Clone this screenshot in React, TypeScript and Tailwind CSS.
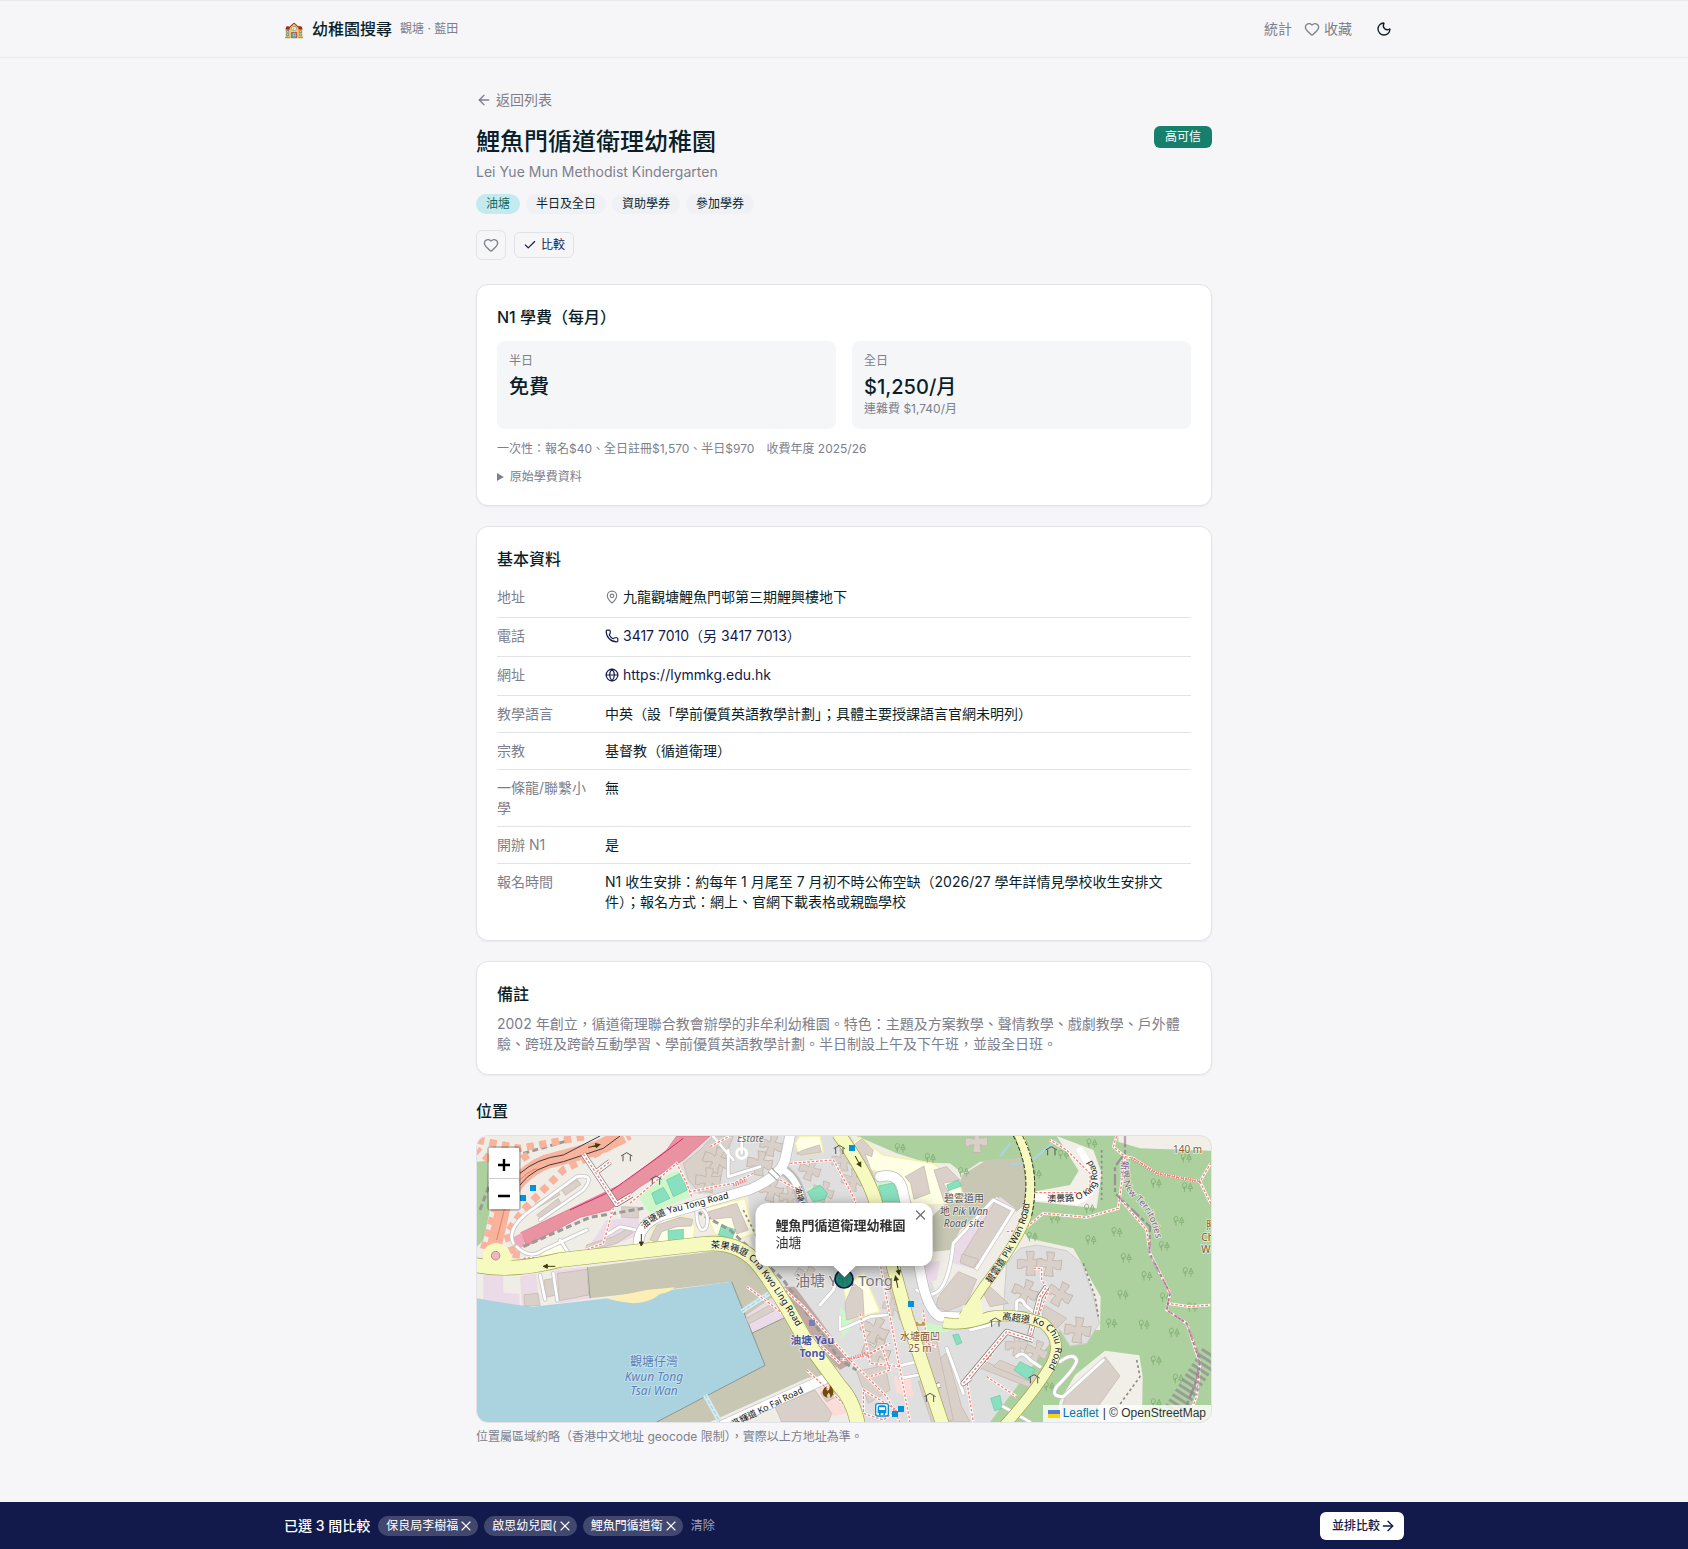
import { ArrowLeft, ArrowRight, Check, Globe, Heart, MapPin, Moon, Phone, X } from "lucide-react";
import type { ReactNode } from "react";

const tags = ["半日及全日", "資助學券", "參加學券"];

const compared = ["保良局李樹福", "啟思幼兒園(", "鯉魚門循道衛"];

const infoRows: { label: string; value: ReactNode; tall?: boolean }[] = [
  {
    label: "地址",
    tall: true,
    value: (
      <span className="flex items-center gap-1">
        <MapPin className="size-3.5 text-[#7d808b]" />
        九龍觀塘鯉魚門邨第三期鯉興樓地下
      </span>
    ),
  },
  {
    label: "電話",
    tall: true,
    value: (
      <a href="tel:34177010" className="flex w-fit items-center gap-1 text-[#131a4b]">
        <Phone className="size-3.5" />
        3417 7010（另 3417 7013）
      </a>
    ),
  },
  {
    label: "網址",
    tall: true,
    value: (
      <a href="https://lymmkg.edu.hk" className="flex w-fit items-center gap-1 text-[#131a4b]">
        <Globe className="size-3.5" />
        https://lymmkg.edu.hk
      </a>
    ),
  },
  { label: "教學語言", value: "中英（設「學前優質英語教學計劃」；具體主要授課語言官網未明列）" },
  { label: "宗教", value: "基督教（循道衛理）" },
  { label: "一條龍/聯繫小學", value: "無" },
  { label: "開辦 N1", value: "是" },
  {
    label: "報名時間",
    value: "N1 收生安排：約每年 1 月尾至 7 月初不時公佈空缺（2026/27 學年詳情見學校收生安排文件）；報名方式：網上、官網下載表格或親臨學校",
  },
];

function Card({ title, children }: { title: string; children: ReactNode }) {
  return (
    <section className="rounded-xl border border-[#e2e3e9] bg-white p-5 shadow-xs">
      <h2 className="mb-2 text-base font-medium">{title}</h2>
      {children}
    </section>
  );
}

function SiteHeader() {
  return (
    <header className="border-y border-[#e9eaee]">
      <div className="mx-auto flex h-14 max-w-6xl items-center justify-between px-4">
        <div className="flex items-center gap-2">
          <a href="#home" className="flex items-center gap-2 text-base font-medium">
            <span aria-hidden="true">🏫</span>
            幼稚園搜尋
          </a>
          <span className="text-xs text-[#7d808b]">觀塘 · 藍田</span>
        </div>
        <nav className="flex items-center gap-3 text-sm text-[#7d808b]">
          <a href="#stats">統計</a>
          <a href="#saved" className="flex items-center gap-1">
            <Heart className="size-4" />
            收藏
          </a>
          <button type="button" aria-label="切換深色模式" className="flex h-8 w-10 items-center justify-center text-[#0a1f29]">
            <Moon className="size-4" />
          </button>
        </nav>
      </div>
    </header>
  );
}

// Map geometry. Units are a third of a CSS pixel.
const towers: [number, number, number][] = [
  [1680, 400, 40], [1738, 402, 40], [1666, 486, 40], [1770, 492, 40], [1824, 600, 42],
  [870, 100, 40], [905, 45, 36], [905, 180, 38], [960, 200, 34], [740, 90, 42], [715, 150, 40],
  [1020, 120, 34], [1120, 90, 36], [1150, 150, 36], [1060, 185, 34], [1215, 600, 44], [1220, 665, 44],
  [1010, 440, 36], [1640, 645, 36], [1700, 665, 36], [1520, 35, 36], [1265, 530, 28],
];

const buildings = [
  "M195 222L262 180L270 194L203 234Z", "M200 255L265 205L272 220L210 264Z", "M275 180L322 148L332 164L286 196Z",
  "M640 100L690 60L730 18L790 18L770 70L750 150L690 190L655 150Z",
  "M540 330L560 285L630 262L668 268L664 288L620 290L575 305L560 338Z",
  "M715 245L800 220L835 300L800 312L785 262L722 268Z",
  "M345 366L350 345L430 320L475 295L488 308L440 340Z", "M455 230L505 232L505 264L455 262Z",
  "M262 430L352 418L356 495L268 512Z", "M222 450L255 445L260 495L228 502Z", "M162 494L204 490L210 526L164 528Z",
  "M828 565L905 522L912 542L836 582Z", "M980 70L1000 60L1048 45L1054 66L992 76Z",
  "M1145 50L1175 26L1210 60L1205 80L1185 72L1215 150L1195 158Z",
  "M1305 140L1362 108L1380 190L1332 208L1322 160Z", "M1392 120L1430 110L1470 150L1420 160L1450 208L1422 215Z",
  "M1480 370L1580 208L1625 240L1520 414Z", "M1476 372L1526 388L1510 414L1470 398Z",
  "M1405 500L1465 425L1520 448L1490 520L1430 544L1398 530Z",
  "M1538 485L1560 470L1615 520L1560 530Z", "M1722 525L1790 565L1755 600L1715 570Z",
  "M1785 800L1905 680L1950 738L1850 876L1765 876Z",
  "M1535 690L1700 760L1685 775L1520 710Z", "M1570 710L1590 690L1720 745L1708 765Z",
  "M1395 700L1430 668L1475 830L1500 876L1440 876Z", "M1335 610L1400 630L1450 870L1415 876L1370 760Z",
  "M1345 755L1390 740L1425 876L1385 876Z", "M1240 430L1290 420L1320 560L1290 570Z",
  "M1125 520L1150 460L1178 480L1182 555L1130 570Z", "M1160 725L1245 705L1260 780L1195 820Z",
  "M915 830L1035 780L1085 850L1075 876L935 876Z", "M1052 790L1085 770L1100 800L1070 815Z",
];

const courts = [
  "M590 150L635 128L652 180L610 200Z", "M545 190L580 172L600 205L558 224Z", "M594 302L640 298L640 338L596 342Z",
  "M755 285L798 300L785 328L745 315Z", "M1012 186L1050 165L1072 190L1065 208L1030 216Z",
  "M1226 168L1272 158L1290 215L1238 215Z", "M1430 165L1465 150L1474 168L1436 182Z",
  "M1632 720L1650 695L1695 718L1675 750Z", "M1562 805L1590 796L1598 835L1574 842Z", "M1448 615L1465 612L1476 638L1460 645Z",
];

const trees: [number, number][] = [
  [1290, 54], [1380, 84], [1480, 126], [1865, 40], [1780, 74], [1698, 132], [1858, 236], [1754, 266],
  [2058, 160], [2152, 172], [2126, 273], [1940, 306], [1862, 330], [2082, 348], [1968, 384], [2154, 426],
  [2030, 438], [1958, 494], [2086, 502], [1924, 580], [2022, 584], [2112, 608], [2058, 692], [2124, 746],
  [1737, 770], [2058, 820], [1686, 320], [2148, 84], [2166, 532],
];

const footpaths = [
  "M720 50L780 18", "M480 220L620 100L650 160L665 200", "M160 385L300 378L400 340L430 235",
  "M830 470L905 525L1000 600L1110 700", "M850 130L790 160L660 185", "M880 420L1000 530L1140 690L1250 800L1290 876",
  "M960 100L1090 90L1150 200L1230 400L1320 876", "M1695 188L1860 188L1860 130L1790 60L1740 30",
  "M1610 305L1660 300L1720 250L1850 262L1945 235L1965 80L1930 50L1940 18",
  "M1965 80L1990 85L2060 130L2190 155L2222 100", "M2190 155L2222 220",
  "M1945 200L2030 300L2040 370L2100 490L2090 540L2150 580L2190 700L2180 800L2150 876",
  "M2090 520L2160 530L2222 525", "M1690 415L1715 415L1715 450L1735 480L1705 560L1680 630",
  "M1680 630L1610 605L1560 680L1490 750L1510 876", "M1110 690L1180 680L1260 640",
  "M1170 550L1200 700L1290 710", "M1010 720L1180 876", "M930 150L985 180L1000 280",
  "M1550 740L1640 800", "M1360 540L1370 640L1400 650", "M1180 780L1280 840L1240 870L1180 850Z",
  "M1190 680L1235 650L1260 720L1200 740",
];

const rails = ["M160 350L360 262L520 235", "M680 245L780 300L940 450L1110 690L1160 720", "M30 240L60 160L120 90", "M160 70L300 30"];

function Tower({ x, y, r }: { x: number; y: number; r: number }) {
  return (
    <g transform={`translate(${x} ${y}) rotate(${(x * 7) % 40}) scale(${r})`}>
      <path
        d="M-.3-.9H.3V-.6L.2-.3H.6L.9-.4V.35H.55L.3.2V.5L.4.9H-.3V.6L-.2.25L-.6.3V.4H-.95V-.3H-.5L-.2-.2V-.5Z"
        fill="#d9d0c9"
        stroke="#c2b3a7"
        strokeWidth=".06"
      />
    </g>
  );
}

function StreetMap() {
  return (
    <svg
      viewBox="21 18 2202 858"
      preserveAspectRatio="xMidYMid slice"
      className="h-full w-full font-['Noto_Sans','Noto_Sans_CJK_TC',sans-serif]"
      role="img"
      aria-label="油塘地圖"
    >
      <defs>
        <path id="yauTong" d="M522 298Q570 250 640 240L800 198" />
        <path id="chaKwoLing" d="M722 354Q800 352 850 398Q910 470 1010 640" />
        <path id="pikWan" d="M1562 462Q1640 350 1668 270Q1682 230 1686 150" />
        <path id="oKing" d="M1732 216L1795 214Q1870 205 1880 160Q1890 110 1845 66" />
        <path id="koChiu" d="M1596 568L1680 578Q1750 590 1756 650Q1754 700 1700 760" />
        <path id="koFai" d="M790 892L1010 782" />
        <path id="newTerritories" d="M1955 92Q1950 165 1985 200Q2050 250 2060 345" />
        <path id="yauTongSide" d="M976 170L992 240" />
        <g id="trees" fill="none" stroke="#7fae74" strokeWidth="2.5">
          <path d="M-8 14V-2M-8-14Q-16-12-14-4Q-14 2-8 1Q-1 1-2-7Q-2-13-8-14M-8 6L-13 2M9 14V4M9-12L2 4H16ZM5-2H13" />
        </g>
        <path id="arrow" d="M-18 0H18M18 0L6-6V6Z" fill="#403a10" stroke="#403a10" strokeWidth="3" />
        <path id="shelter" d="M-17-4L0-14L17-4M-11-6V12M11-6V12" fill="none" stroke="#555" strokeWidth="3" />
      </defs>

      {/* land use */}
      <path fill="#f0ece6" d="M21 18H2223V876H21Z" />
      <path fill="#e0dfdf" d="M640 18H1140L1310 220L1400 500L1560 560L1660 545L1770 600L1760 680L1580 876H1150L1050 700L880 440L840 330L835 200L650 190L620 90Z" />
      <path fill="#add19e" d="M21 95L52 92L58 250L40 330L21 350Z" />
      <path fill="#add19e" d="M1160 18H1640L1660 90L1530 95L1478 130L1440 100L1370 98L1280 70Z" />
      <path fill="#c7c7b4" d="M1655 84L1550 90L1476 135L1460 190L1385 260L1390 365L1440 360L1470 300L1580 200L1640 245L1690 200Z" />
      <path fill="#add19e" d="M1665 18H2223V876H1560L1770 600L1890 600L1892 500L1810 355L1675 325L1650 290L1700 200L1690 120Z" />
      <path fill="#f2efe9" d="M1760 18L1870 60L1895 130L1880 235L1695 215L1690 185L1800 165L1826 122ZM1945 18H2223V62L2010 55L1945 35Z" />
      <path fill="#f2efe9" d="M1768 816L1815 735L1905 662L2008 676L2018 740L2016 876H1765Z" />
      <path fill="#e0dfdf" stroke="#cfcdca" strokeWidth="3" d="M1610 400L1650 355L1700 345L1790 362L1835 400L1870 500L1888 580L1850 640L1800 648L1770 600L1710 545H1600L1605 470Z" />
      <path fill="#c7c7b4" d="M352 412L720 365Q820 360 870 440L1110 700L1085 730L720 800L560 876L540 890L885 706L785 455L600 478L360 505Z" />
      <path fill="#c7c7b4" d="M845 610L950 560L1065 720L720 876H560L885 706Z" />
      <path fill="#ebdbe8" d="M40 436L100 430V488L148 492V526L40 514ZM150 440L198 430L208 525L155 528ZM256 420L350 410L358 506L270 520ZM370 330L410 270L505 262L515 310L420 350L330 372ZM825 558L910 500L950 560L845 610ZM1445 350L1590 200L1635 235L1520 420L1450 400ZM1360 400L1410 392L1400 450L1365 460Z" />
      <path fill="#ffffe5" stroke="#f3f0a8" strokeWidth="4" d="M535 340L560 270L650 260L675 290L670 330ZM700 235L825 205L850 310L800 330L735 312ZM975 40L990 18H1050L1060 65L990 78ZM1135 50L1170 22L1240 75L1390 100L1470 165L1480 200L1410 225L1330 225L1250 130L1200 120ZM1120 470L1180 430L1230 545L1140 568ZM205 376L270 335L300 375Z" />
      <path fill="#cdf7c9" d="M505 200L560 160L600 130L640 120L660 200L540 250ZM1010 180L1050 155L1040 200ZM1110 530L1155 582L1115 625ZM1215 160L1280 150L1300 215H1230ZM1340 570L1420 590L1450 600L1400 612L1360 600Z" />
      <path fill="#fcdcd7" d="M1040 770L1100 740L1130 850L1090 860ZM1270 740L1320 730L1330 800L1280 790Z" />
      <path fill="#aad3df" d="M21 505Q100 520 190 530L440 502L785 455L885 706L560 876H21Z" />
      <path fill="none" stroke="#77776c" strokeWidth="2" d="M785 455L885 706L560 876M845 610L950 560M352 412L360 505" />
      <path fill="#fceeb5" d="M410 505L530 480L615 472Q600 488 570 492Q540 518 490 520Q440 515 410 505Z" />
      <path fill="none" stroke="#d4eaf1" strokeWidth="14" d="M815 545L905 485M705 795L750 876" />
      <path fill="none" stroke="#aad3df" strokeWidth="7" d="M1590 80L1620 40M1620 104L1680 96L1760 30" />
      <path fill="none" stroke="#9ccbe0" strokeWidth="3" strokeDasharray="12 6" d="M815 545L905 485M705 795L750 876" />

      {/* buildings and courts */}
      <g fill="#d9d0c9" stroke="#c2b3a7" strokeWidth="2">
        {buildings.map((d) => (
          <path key={d} d={d} />
        ))}
      </g>
      {towers.map(([x, y, r]) => (
        <Tower key={`${x}-${y}`} x={x} y={y} r={r} />
      ))}
      <g fill="#88e0be" stroke="#65c7a2" strokeWidth="2">
        {courts.map((d) => (
          <path key={d} d={d} />
        ))}
      </g>
      {trees.map(([x, y]) => (
        <use key={`${x}-${y}`} href="#trees" x={x} y={y} />
      ))}
      <path fill="none" stroke="#8d8b8b" strokeWidth="5" strokeDasharray="8 8" d="M1895 60L1895 210M1840 400L1875 500L1885 560M2000 690L2010 740L1930 850M1350 440L1360 520M820 240L860 320" />
      <path fill="#c0a9a2" d="M940 470L975 470L1145 700L1110 720L1040 640Z" />

      {/* depot, motorway and rails */}
      <path fill="#e892a2" stroke="#dc6a83" strokeWidth="2" d="M152 308L460 160L590 60L620 18H720L640 90L510 170L420 240L330 262L170 348Z" />
      <path fill="#f0a8bb" d="M130 322L155 308L165 345L140 362Z" />
      <path fill="none" stroke="#d7266e" strokeWidth="3" d="M300 240L420 185L560 85L640 25" />
      <g fill="none" stroke="#999" strokeWidth="9" strokeDasharray="18 10">
        {rails.map((d) => (
          <path key={d} d={d} />
        ))}
      </g>
      <path fill="none" stroke="#f9b29c" strokeWidth="22" strokeDasharray="22 16" d="M21 30L150 55L350 18M60 90L21 60M150 375L40 360L60 290L110 120L180 70M130 370L110 310L160 240L280 120L380 70L480 18" />
      <path fill="none" stroke="#f9b29c" strokeWidth="44" d="M70 360L100 230Q140 130 230 95L380 55L460 18" />
      <path fill="none" stroke="#3d3d3d" strokeWidth="3" d="M150 130Q200 85 280 75L390 18M150 165Q190 110 280 95L400 55L450 18" />
      <path fill="none" stroke="#d66a4c" strokeWidth="2" d="M80 330L110 210Q140 140 200 115" />

      {/* minor roads */}
      <g fill="none" strokeLinecap="round" strokeLinejoin="round">
        <g stroke="#c9c6c4">
          <path strokeWidth="13" d="M130 340Q110 300 170 250L320 140Q380 130 340 180L210 270M140 350Q180 390 220 360L350 300M270 330L300 375M410 315L450 290L500 300M680 245Q700 225 712 260Q715 300 695 300Q680 290 680 245M250 430L262 512M210 435L225 508M775 60L775 140L870 110" />
          <path strokeWidth="13" d="M1050 525L1090 480L1105 430M1340 480Q1430 540 1450 340L1570 210L1630 240L1520 415M1640 540V515Q1655 500 1665 525L1690 545M1770 695Q1810 665 1820 690Q1820 710 1760 770Q1740 800 1780 800L1900 690M1640 680Q1655 660 1680 690L1710 710M1430 655L1480 790M1500 600L1560 585L1590 560" />
          <path strokeWidth="12" d="M815 18V70M790 90L730 20M1110 560L1110 600L1200 560L1250 555M1280 710L1340 695M1290 745L1345 735M1600 830L1680 876" />
        </g>
        <g stroke="#fff">
          <path strokeWidth="8" d="M130 340Q110 300 170 250L320 140Q380 130 340 180L210 270M140 350Q180 390 220 360L350 300M270 330L300 375M410 315L450 290L500 300M680 245Q700 225 712 260Q715 300 695 300Q680 290 680 245M250 430L262 512M210 435L225 508M775 60L775 140L870 110" />
          <path strokeWidth="9" d="M1050 525L1090 480L1105 430M1340 480Q1430 540 1450 340L1570 210L1630 240L1520 415M1640 540V515Q1655 500 1665 525L1690 545M1770 695Q1810 665 1820 690Q1820 710 1760 770Q1740 800 1780 800L1900 690M1640 680Q1655 660 1680 690L1710 710M1430 655L1480 790M1500 600L1560 585L1590 560" />
          <path strokeWidth="8" d="M815 18V70M790 90L730 20M1110 560L1110 600L1200 560L1250 555M1280 710L1340 695M1290 745L1345 735M1600 830L1680 876" />
        </g>
        <path stroke="#bbb" strokeWidth="33" d="M505 345Q505 280 580 255L840 178Q930 140 945 90L960 18M1230 140Q1290 125 1300 190L1350 420Q1370 540 1410 560L1480 562M760 885L1090 735M940 120Q990 150 1000 240" />
        <path stroke="#fff" strokeWidth="29" d="M505 345Q505 280 580 255L840 178Q930 140 945 90L960 18M1230 140Q1290 125 1300 190L1350 420Q1370 540 1410 560L1480 562M760 885L1090 735" />
        <path stroke="#fff" strokeWidth="20" d="M940 120Q990 150 1000 240M1695 200L1820 214Q1880 190 1872 130L1830 60" />
        <circle cx="815" cy="70" r="15" stroke="#fff" strokeWidth="8" />
      </g>

      <g fill="none" stroke="#fff" strokeWidth="8">
        {footpaths.map((d) => (
          <path key={d} d={d} />
        ))}
      </g>
      <g fill="none" stroke="#f5837a" strokeWidth="4" strokeDasharray="8 5">
        {footpaths.map((d) => (
          <path key={d} d={d} />
        ))}
      </g>
      <path fill="none" stroke="#ee7e78" strokeWidth="10" strokeDasharray="3 4" d="M1985 85L2060 130L2190 155M900 440L935 475M1130 690L1190 670M790 165L830 150M675 325L695 325" />

      {/* footbridges */}
      <g fill="none" strokeLinejoin="round">
        <path stroke="#777" strokeWidth="17" d="M340 72L440 222L485 195M380 125L420 95M900 120L925 145M1500 745L1480 760L1610 605L1690 630M1680 615L1710 500L1730 470M1375 775L1410 765" />
        <path stroke="#fff" strokeWidth="13" d="M340 72L440 222L485 195M380 125L420 95M900 120L925 145M1500 745L1480 760L1610 605L1690 630M1680 615L1710 500L1730 470M1375 775L1410 765" />
        <path stroke="#f5837a" strokeWidth="4" strokeDasharray="8 5" d="M340 72L440 222L485 195M380 125L420 95M1480 760L1610 605L1690 630M1680 615L1710 500L1730 470" />
      </g>

      {/* main roads */}
      <g fill="none" strokeLinejoin="round">
        <g stroke="#9ea24c">
          <path strokeWidth="46" d="M15 405Q120 428 270 390L700 342Q810 330 870 410Q930 490 1000 620L1110 770Q1150 810 1165 890" />
          <path strokeWidth="42" d="M1105 10Q1190 130 1215 210L1310 560L1420 890" />
          <path strokeWidth="30" d="M1645 10Q1700 130 1670 260Q1640 340 1540 470L1480 560" />
          <path strokeWidth="34" d="M1420 578Q1480 590 1560 560Q1640 548 1720 580Q1780 630 1745 700Q1700 780 1600 890" />
        </g>
        <g stroke="#f7fabf">
          <path strokeWidth="42" d="M15 405Q120 428 270 390L700 342Q810 330 870 410Q930 490 1000 620L1110 770Q1150 810 1165 890" />
          <path strokeWidth="38" d="M1105 10Q1190 130 1215 210L1310 560L1420 890" />
          <path strokeWidth="26" d="M1645 10Q1700 130 1670 260Q1640 340 1540 470L1480 560" />
          <path strokeWidth="30" d="M1420 578Q1480 590 1560 560Q1640 548 1720 580Q1780 630 1745 700Q1700 780 1600 890" />
        </g>
        <path stroke="#333" strokeWidth="3" strokeDasharray="12 6" d="M1630 18Q1690 130 1655 255M1658 18Q1714 130 1684 262" />
      </g>
      <path fill="#f7fabf" d="M1465 570L1480 530L1530 500L1540 560ZM40 400Q30 345 78 338Q125 345 125 392Z" />
      <circle cx="77" cy="377" r="13" fill="#f0b6c1" stroke="#8f7770" strokeWidth="2" />

      <path fill="none" stroke="#8d618b" strokeOpacity=".55" strokeWidth="7" strokeDasharray="34 8 12 8" d="M1965 18L1965 70L1935 110V190L2040 290L2038 370L2100 490L2090 540L2150 580L2190 690L2180 750L2130 876" />
      <path fill="none" stroke="#8c7d91" strokeOpacity=".6" strokeWidth="60" strokeDasharray="9 9" d="M2223 670L2100 860" />

      {/* symbols */}
      <use href="#arrow" transform="translate(238 409) rotate(180)" />
      <use href="#arrow" transform="translate(514 330) rotate(90)" />
      <use href="#arrow" transform="translate(1164 94) rotate(62)" />
      <use href="#arrow" transform="translate(1284 416) rotate(78)" />
      <use href="#arrow" transform="translate(1280 456) rotate(258)" />
      <use href="#arrow" transform="translate(372 48) rotate(-14)" />
      <use href="#shelter" x="470" y="82" />
      <use href="#shelter" x="558" y="152" />
      <use href="#shelter" x="1108" y="60" />
      <use href="#shelter" x="1744" y="64" />
      <use href="#shelter" x="1576" y="578" />
      <use href="#shelter" x="1692" y="748" />
      <use href="#shelter" x="1380" y="804" />
      <path fill="#0092da" d="M180 165h18v18h-18zM150 195h18v18h-18zM1137 45h18v18h-18zM1314 513h18v18h-18zM1266 843h18v18h-18zM1284 828h18v18h-18z" />
      <path fill="#7981b0" d="M1017 570h18v18h-18z" />
      <path fill="#d08f55" d="M1338 576h6v5h12v-6h8v12h-26z" />
      <rect x="1217" y="821" width="38" height="37" rx="6" fill="#fff" stroke="#0092da" strokeWidth="4" />
      <path fill="#0092da" d="M1223 832Q1223 826 1230 826H1242Q1249 826 1249 832V850H1245V855H1240V850H1232V855H1227V850H1223ZM1227 832V840H1245V832Z" fillRule="evenodd" />
      <path fill="#734a08" d="M1073 804Q1055 798 1058 783Q1060 773 1070 768Q1066 779 1073 782Q1083 775 1078 764Q1092 776 1090 790Q1088 801 1080 804Q1083 794 1076 788Q1068 795 1073 804Z" />

      {/* labels */}
      <g fill="#111" stroke="#fff" strokeWidth="3" strokeOpacity=".6" paintOrder="stroke" fontSize="27">
        <text><textPath href="#yauTong">油塘道 Yau Tong Road</textPath></text>
        <text fontSize="28"><textPath href="#chaKwoLing">茶果嶺道 Cha Kwo Ling Road</textPath></text>
        <text fontSize="28"><textPath href="#pikWan">碧雲道 Pik Wan Road</textPath></text>
        <text><textPath href="#oKing">澳景路 O King Road</textPath></text>
        <text fontSize="28"><textPath href="#koChiu">高超道 Ko Chiu Road</textPath></text>
        <text><textPath href="#koFai">高輝道 Ko Fai Road</textPath></text>
        <text fontSize="24"><textPath href="#yauTongSide">油塘道</textPath></text>
      </g>
      <g stroke="#fff" strokeWidth="5" strokeOpacity=".6" paintOrder="stroke" textAnchor="middle">
        <text fill="#8d618b" fontSize="28" textAnchor="start"><textPath href="#newTerritories">新界 New Territories</textPath></text>
        <text x="841" y="36" fill="#666" fontSize="30" fontStyle="italic">Estate</text>
        <g fill="#555" fontSize="30">
          <text x="1482" y="216">碧雲道用</text>
          <text x="1482" y="255">地 <tspan fontStyle="italic">Pik Wan</tspan></text>
          <text x="1482" y="290" fontStyle="italic">Road site</text>
        </g>
        <g fill="#5b80b8" fontSize="36" strokeOpacity=".4">
          <text x="552" y="708">觀塘仔灣</text>
          <text x="552" y="752" fontStyle="italic">Kwun Tong</text>
          <text x="552" y="795" fontStyle="italic">Tsai Wan</text>
        </g>
        <g fill="#4a55a8" fontSize="32" fontWeight="700">
          <text x="1027" y="641">油塘 Yau</text>
          <text x="1027" y="681">Tong</text>
        </g>
        <g fill="#8a5a2b" fontSize="30">
          <text x="1350" y="630">水塘面凹</text>
          <text x="1350" y="665">25 m</text>
          <text x="2153" y="68">140 m</text>
        </g>
        <g fill="#8a5a2b" fontSize="30" textAnchor="start">
          <text x="2208" y="298">照鏡環山</text>
          <text x="2194" y="333">Chiu Keng</text>
          <text x="2194" y="368">Wan Shan</text>
        </g>
        <text x="1122" y="468" fill="#777" fontSize="45">油塘 Yau Tong</text>
      </g>
      <circle cx="1122" cy="447" r="27" fill="#0f7f6a" fillOpacity=".9" stroke="#131a4b" strokeWidth="5" />
    </svg>
  );
}

function LocationMap() {
  return (
    <div className="relative h-72 overflow-hidden rounded-xl border border-[#e2e3e9]">
      <StreetMap />

      <div className="absolute left-2.5 top-2.5 rounded-sm border-2 border-black/20 bg-clip-padding text-black">
        <button type="button" aria-label="放大" className="flex h-[31px] w-[30px] items-center justify-center border-b border-[#ccc] bg-white pt-1">
          <svg viewBox="0 0 12 12" className="size-3" aria-hidden="true">
            <path d="M6 0V12M0 6H12" stroke="currentColor" strokeWidth="2.4" />
          </svg>
        </button>
        <button type="button" aria-label="縮小" className="flex h-[30px] w-[30px] items-center justify-center bg-white pt-1">
          <svg viewBox="0 0 12 12" className="size-3" aria-hidden="true">
            <path d="M0 6H12" stroke="currentColor" strokeWidth="2.4" />
          </svg>
        </button>
      </div>

      <div className="absolute bottom-[calc(50%+13px)] left-1/2 w-[177px] -translate-x-1/2 text-[#333] drop-shadow-[0_3px_7px_rgba(0,0,0,0.4)]">
        <div className="absolute -bottom-2 left-1/2 size-4 -translate-x-1/2 rotate-45 bg-white" />
        <div className="relative rounded-xl bg-white pb-[15px] pl-5 pt-3.5 text-[13px] leading-[17px]">
          <p className="whitespace-nowrap font-bold">鯉魚門循道衛理幼稚園</p>
          <p>油塘</p>
          <button type="button" aria-label="關閉" className="absolute right-0 top-0 flex size-6 items-center justify-center text-[#757575]">
            <X className="size-4" strokeWidth={2} />
          </button>
        </div>
      </div>

      <div className="absolute bottom-0 right-0 flex items-center gap-1 bg-white/80 px-[5px] font-['Liberation_Sans',sans-serif] text-xs leading-[17px] text-[#333]">
        <a href="#leaflet" className="flex items-center gap-[3px] text-[#0078a8]">
          <svg viewBox="0 0 12 8" className="h-2 w-3" aria-hidden="true">
            <path fill="#4c7be1" d="M0 0h12v4H0z" />
            <path fill="#ffd500" d="M0 4h12v4H0z" />
          </svg>
          Leaflet
        </a>
        <span>| © OpenStreetMap</span>
      </div>
    </div>
  );
}

function CompareBar() {
  return (
    <footer className="sticky bottom-0 mt-auto bg-[#121a4b] text-white">
      <div className="mx-auto flex max-w-6xl items-center justify-between px-4 pb-[9px] pt-2.5">
        <div className="flex items-center gap-2">
          <span className="text-sm font-medium">已選 3 間比較</span>
          <ul className="flex gap-1.5">
            {compared.map((name) => (
              <li key={name} className="flex h-5 items-center rounded-full bg-white/20 pl-2 pr-1 text-xs">
                {name}
                <button type="button" aria-label={`移除${name}`}>
                  <X className="size-4" strokeWidth={1.75} />
                </button>
              </li>
            ))}
          </ul>
          <button type="button" className="text-xs text-white/60">清除</button>
        </div>
        <button type="button" className="flex h-7 items-center rounded-md bg-white pl-3 pr-2 text-xs font-medium text-[#121a4b]">
          並排比較
          <ArrowRight className="size-4" />
        </button>
      </div>
    </footer>
  );
}

export default function App() {
  return (
    <div className="flex min-h-screen flex-col bg-[#f6f6f9] font-['Inter','Noto_Sans_CJK_TC',sans-serif] text-[#0a1f29]" lang="zh-HK">
      <SiteHeader />

      <main className="mx-auto w-full max-w-3xl px-4 py-8">
        <a href="#list" className="flex w-fit items-center gap-1 text-sm text-[#7d808b]">
          <ArrowLeft className="size-4" />
          返回列表
        </a>

        <div className="mt-4 flex items-start justify-between">
          <div>
            <h1 className="text-2xl font-medium">鯉魚門循道衛理幼稚園</h1>
            <p className="mt-1 text-sm text-[#7d808b]">Lei Yue Mun Methodist Kindergarten</p>
          </div>
          <span className="rounded-md bg-[#17806d] px-[11px] py-[3px] text-xs text-white">高可信</span>
        </div>

        <ul className="mt-3 flex flex-wrap gap-1.5 text-xs leading-5">
          <li className="rounded-full bg-[#c3eaee] px-2.5 text-[#146b5c]">油塘</li>
          {tags.map((tag) => (
            <li key={tag} className="rounded-full bg-[#eff1f5] px-2.5">{tag}</li>
          ))}
        </ul>

        <div className="mt-4 flex items-center gap-2">
          <button type="button" aria-label="收藏" className="flex size-[30px] items-center justify-center rounded-md border border-[#e2e3e9] text-[#7d808b]">
            <Heart className="size-4" />
          </button>
          <button type="button" className="flex h-[26px] items-center gap-1 rounded-md border border-[#e2e3e9] px-2 text-xs text-[#131a4b]">
            <Check className="size-3.5" />
            比較
          </button>
        </div>

        <div className="mt-6 space-y-5">
          <Card title="N1 學費（每月）">
            <div className="mt-3 grid grid-cols-2 gap-4">
              <div className="rounded-lg bg-[#f5f6f8] p-3">
                <p className="text-xs text-[#7d808b]">半日</p>
                <p className="mt-1 text-xl font-medium">免費</p>
              </div>
              <div className="rounded-lg bg-[#f5f6f8] p-3">
                <p className="text-xs text-[#7d808b]">全日</p>
                <p className="mt-1 text-xl font-medium">$1,250/月</p>
                <p className="text-xs text-[#7d808b]">連雜費 $1,740/月</p>
              </div>
            </div>
            <p className="mt-3 text-xs text-[#7d808b]">一次性：報名$40、全日註冊$1,570、半日$970　收費年度 2025/26</p>
            <details className="mt-3 text-xs text-[#7d808b]">
              <summary>原始學費資料</summary>
            </details>
          </Card>

          <Card title="基本資料">
            <dl className="divide-y divide-[#e2e3e9] text-sm">
              {infoRows.map((row) => (
                <div key={row.label} className="grid grid-cols-[6rem_1fr] gap-3 py-2">
                  <dt className="text-[#7d808b]">{row.label}</dt>
                  <dd className={row.tall ? "h-[22px]" : ""}>{row.value}</dd>
                </div>
              ))}
            </dl>
          </Card>

          <Card title="備註">
            <p className="text-sm text-[#7d808b]">
              2002 年創立，循道衛理聯合教會辦學的非牟利幼稚園。特色：主題及方案教學、聲情教學、戲劇教學、戶外體驗、跨班及跨齡互動學習、學前優質英語教學計劃。半日制設上午及下午班，並設全日班。
            </p>
          </Card>
        </div>

        <section className="mt-6">
          <h2 className="mb-3 text-base font-medium">位置</h2>
          <LocationMap />
          <p className="mt-1.5 text-xs text-[#7d808b]">位置屬區域約略（香港中文地址 geocode 限制），實際以上方地址為準。</p>
        </section>
      </main>

      <CompareBar />
    </div>
  );
}
